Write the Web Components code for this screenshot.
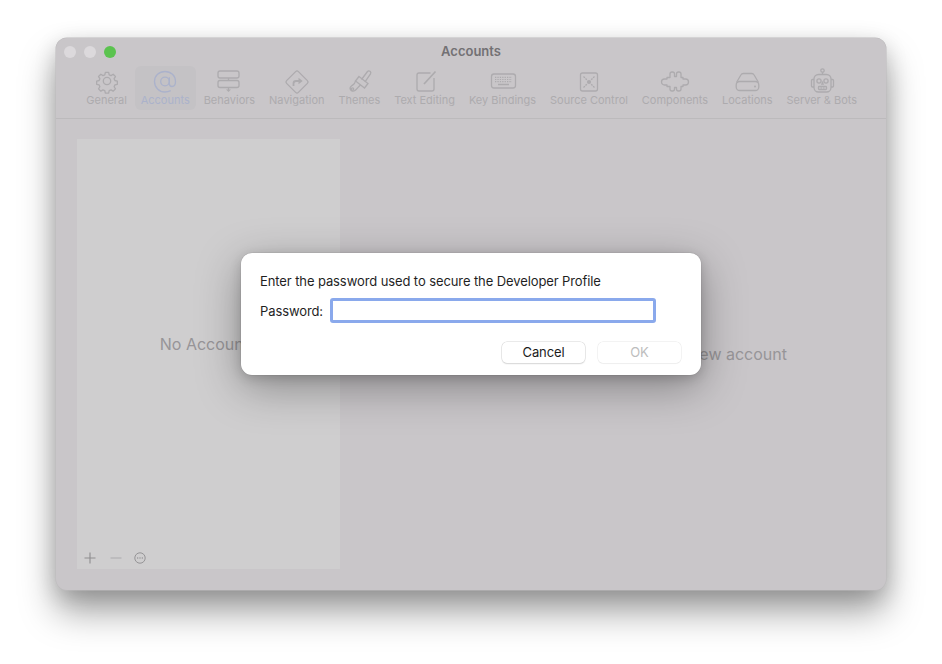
<!DOCTYPE html>
<html>
<head>
<meta charset="utf-8">
<title>Accounts</title>
<style>
html, body { margin: 0; background: #fff; }
body { font-family: Inter, "Liberation Sans", sans-serif; width: 942px; height: 664px; overflow: hidden; }
</style>
</head>
<body>

<prefs-window title="Accounts">
    <prefs-tab label="General" icon="general"></prefs-tab>
    <prefs-tab label="Accounts" icon="accounts" selected></prefs-tab>
    <prefs-tab label="Behaviors" icon="behaviors"></prefs-tab>
    <prefs-tab label="Navigation" icon="navigation"></prefs-tab>
    <prefs-tab label="Themes" icon="themes"></prefs-tab>
    <prefs-tab label="Text Editing" icon="editing"></prefs-tab>
    <prefs-tab label="Key Bindings" icon="keys"></prefs-tab>
    <prefs-tab label="Source Control" icon="source"></prefs-tab>
    <prefs-tab label="Components" icon="components"></prefs-tab>
    <prefs-tab label="Locations" icon="locations"></prefs-tab>
    <prefs-tab label="Server &amp; Bots" icon="bots"></prefs-tab>

    <accounts-list slot="sidebar"></accounts-list>
    <span slot="detail">new account</span>

    <password-dialog slot="dialog"></password-dialog>
</prefs-window>

<script>
// all toolbar icons sit in a 30x30 box
const ICONS = {
    general: `<circle cx="15" cy="14" r="3.700"/><g transform="translate(15 14) scale(.82) translate(-15 -15)" stroke-width="1.600"><path d="M13 4.500h4l.7 3 2.200 .9 2.600-1.600 2.800 2.800-1.600 2.600 .9 2.200 3 .7v4l-3 .7-.9 2.200 1.600 2.600-2.800 2.800-2.600-1.600-2.200 .9-.7 3h-4l-.7-3-2.200-.9-2.600 1.600-2.800-2.800 1.600-2.600-.9-2.200-3-.7v-4l3-.7 .9-2.200-1.600-2.600 2.800-2.800 2.600 1.600 2.200-.9z" stroke-linejoin="round"/></g>`,
    accounts: `<circle cx="15" cy="14.500" r="4.300"/><path d="M19.300 10.200v6.300c0 2 1.200 3 2.700 3 2.300 0 3.500-2.300 3.500-5 0-5.800-4.600-10-10.500-10S4.500 8.700 4.500 14.500 9.100 25 15 25c2.200 0 4-.5 5.700-1.400"/>`,
    behaviors: `<rect x="4" y="4" width="21" height="7" rx="2"/><rect x="4" y="13.500" width="21" height="7" rx="2"/><path d="M14.500 11v2.500M14.500 20.500v2.500"/><path d="M12 22.500h5l-2.500 2.500z" fill="currentColor" stroke="none"/>`,
    navigation: `<path d="M13.600 4.600a2 2 0 0 1 2.800 0l9 9a2 2 0 0 1 0 2.800l-9 9a2 2 0 0 1-2.800 0l-9-9a2 2 0 0 1 0-2.800z"/><path d="M11.500 19v-2.500c0-1.500 1-2.500 2.500-2.500h3.500" stroke-width="1.800"/><path d="M16.500 10.800l4.200 3.200-4.200 3.200z" fill="currentColor" stroke="none"/>`,
    themes: `<path d="M17.500 12.500l6-8a1.900 1.900 0 0 1 3 2.300l-5.500 8"/><path d="M15 9.500l9 7-3.500 4.500-9-7z"/><path d="M11.500 14c-.5 3-2 3.500-3.500 4.500-1.500 1-2.500 2.500-1.500 4.200s3 1.800 4.500 .8c2-1.300 3-3.500 5.500-5.500"/><circle cx="8.500" cy="22" r="1.200"/>`,
    editing: `<path d="M20.500 6H9a2 2 0 0 0-2 2v14a2 2 0 0 0 2 2h13a2 2 0 0 0 2-2V11"/><path d="M14 17L25.500 4.500" stroke-width="1.700"/>`,
    keys: `<rect x="3.500" y="7" width="24" height="14" rx="2.500"/><path d="M7 10.300h17M7 12.500h17M7 14.700h17" stroke-dasharray="1.300 1.100" stroke-width="1.200"/><path d="M10 17.500h11" stroke-width="1.500"/>`,
    source: `<rect x="6.500" y="6" width="17" height="18" rx="2"/><circle cx="15" cy="15" r="2.100" fill="currentColor" stroke="none"/><path d="M9.500 9.500l3.300 3.300M20.500 9.500l-3.300 3.300M9.500 20.500l3.300-3.300M20.500 20.500l-3.300-3.300" stroke-dasharray="2 .8"/>`,
    components: `<path d="M7 10.500H10V7a2 2 0 0 1 2-2h.5a2 2 0 0 1 2 2V9.500h2V7a2 2 0 0 1 2-2h.5a2 2 0 0 1 2 2v3.500H23V12h2.500a3 3 0 0 1 0 6H23v1.500H21V22a2 2 0 0 1-2 2h-.5a2 2 0 0 1-2-2V20.500h-2V22a2 2 0 0 1-2 2H12a2 2 0 0 1-2-2V19.500H7V18H4.500a3 3 0 0 1 0-6H7z" stroke-linejoin="round"/>`,
    locations: `<path d="M4.500 15.500L9 7.800A2.500 2.500 0 0 1 11.200 6.500h8.600A2.500 2.500 0 0 1 22 7.800L26.500 15.500"/><rect x="4.200" y="14.500" width="22.600" height="9" rx="3.500"/><circle cx="23" cy="19.500" r="1" fill="currentColor" stroke="none"/>`,
    bots: `<circle cx="15.500" cy="3.500" r="1.700"/><path d="M15.500 5.200v2.300"/><rect x="7" y="7.500" width="17" height="17.500" rx="4.500"/><path d="M7 12.500H5.500a1 1 0 0 0-1 1v5.500a1 1 0 0 0 1 1H7M24 12.500h1.500a1 1 0 0 1 1 1v5.500a1 1 0 0 1-1 1H24"/><circle cx="12" cy="14" r="2.100"/><circle cx="19" cy="14" r="2.100"/><path d="M15.500 15.500l-.6 1.500h1.200z"/><rect x="11.500" y="19.500" width="8" height="3" rx=".8"/><path d="M14.200 19.500v3M16.800 19.500v3" stroke-width=".8"/>`
}

class PrefsWindow extends HTMLElement {
    constructor() {
        super();
        this.attachShadow({mode: 'open'});
        this.shadowRoot.innerHTML = `
        <style>
        :host { display: flex; flex-direction: column; position: relative; box-sizing: border-box; width: 830px; height: 552px; margin: 38px 0 0 56px;
            background: #c9c6c9; border-radius: 11px; color: #adabae;
            box-shadow: 0 0 0 .5px #bdbbbd, 0 22px 36px rgba(0,0,0,.36), 0 6px 22px rgba(0,0,0,.16); }
        .title { height: 28px; display: flex; align-items: center; justify-content: center; position: relative;
            font-size: 13px; font-weight: 600; color: #737174; padding-bottom: 2px; box-sizing: border-box; }
        .lights { position: absolute; left: 8px; top: 8px; display: flex; gap: 8px; }
        .lights i { width: 12px; height: 12px; border-radius: 50%; background: #dcd9dc; }
        .lights i.on { background: #5bc34f; }
        .tools { display: flex; gap: 1.900px; padding: 0 0 8px 24.300px; border-bottom: 1px solid #bcbabc; }
        .body { flex: 1; display: flex; padding: 20px 21px 21px; }
        .side { width: 263px; flex: none; display: flex; }
        .detail { flex: 1; display: flex; align-items: center; justify-content: flex-end; padding-right: 78px; font-size: 16px; color: #979598; }
        </style>
        <div class="title">
            <div class="lights"><i></i><i></i><i class="on"></i></div>
            <span>${this.getAttribute("title")}</span>
        </div>
        <div class="tools"><slot></slot></div>
        <div class="body">
            <div class="side"><slot name="sidebar"></slot></div>
            <div class="detail"><slot name="detail"></slot></div>
        </div>
        <slot name="dialog"></slot>`;
    }
}
customElements.define('prefs-window', PrefsWindow);

class PrefsTab extends HTMLElement {
    constructor() {
        super();
        this.attachShadow({mode: 'open'});
        this.shadowRoot.innerHTML = `
        <style>
        :host { display: flex; flex-direction: column; align-items: center; height: 44px; padding: 0 6px; border-radius: 6px;
            font-size: 11px; color: #adabae; white-space: nowrap; }
        :host([selected]) { background: #c4c2c5; color: #abb2cb; }
        svg { width: 30px; height: 30px; margin-top: 1px; fill: none; stroke: currentColor; stroke-width: 1.300; flex: none; }
        span { line-height: 12px; margin-top: -3px; }
        </style>
        <svg viewBox="0 0 30 30">${ICONS[this.getAttribute("icon")]}</svg>
        <span>${this.getAttribute("label").replace("&", "&amp;")}</span>`;
    }
}
customElements.define('prefs-tab', PrefsTab);

class AccountsList extends HTMLElement {
    constructor() {
        super();
        this.attachShadow({mode: 'open'});
        this.shadowRoot.innerHTML = `
        <style>
        :host { display: flex; flex-direction: column; flex: 1; background: #cfcecf; }
        .empty { flex: 1; display: flex; align-items: center; justify-content: center; padding-top: 2px; font-size: 16px; color: #979598; }
        .foot { height: 22px; display: flex; align-items: center; gap: 8px; padding-left: 6px; color: #8f8d90; }
        svg { width: 14px; height: 14px; fill: none; stroke: currentColor; stroke-width: 1.100; }
        .off { color: #b0aeb1; margin-left: 4px; margin-right: 2px; }
        </style>
        <div class="empty">No Accounts</div>
        <div class="foot">
            <svg viewBox="0 0 14 14"><path d="M7 1.500v11M1.500 7h11"/></svg>
            <svg class="off" viewBox="0 0 14 14"><path d="M1.500 7h11"/></svg>
            <svg viewBox="0 0 14 14" style="stroke-width:.9"><circle cx="7" cy="7" r="5.200"/><g fill="currentColor" stroke="none"><circle cx="4.700" cy="7" r=".65"/><circle cx="7" cy="7" r=".65"/><circle cx="9.300" cy="7" r=".65"/></g></svg>
        </div>`;
    }
}
customElements.define('accounts-list', AccountsList);

class DialogButton extends HTMLElement {
    constructor() {
        super();
        this.attachShadow({mode: 'open'});
        this.shadowRoot.innerHTML = `
        <style>
        :host { display: flex; align-items: center; justify-content: center; box-sizing: border-box; width: 83px; height: 21px; padding-bottom: 1px;
            background: #fff; border-radius: 5px; font-size: 13px; color: #1c1c1c;
            box-shadow: 0 0 0 .5px #d5d5d5, 0 1px 1.500px rgba(0,0,0,.14); }
        :host([disabled]) { color: #bdbdbd; box-shadow: 0 0 0 .5px #e8e8e8, 0 1px 1px rgba(0,0,0,.04); }
        </style>
        <slot></slot>`;
    }
}
customElements.define('dialog-button', DialogButton);

class PasswordDialog extends HTMLElement {
    constructor() {
        super();
        this.attachShadow({mode: 'open'});
        this.shadowRoot.innerHTML = `
        <style>
        :host { display: block; position: absolute; left: 185px; top: 215px; box-sizing: border-box; width: 460px; height: 122px;
            padding: 19px 20px 0 19px; background: #fff; border-radius: 11px; color: #1f1f1f; font-size: 13px; letter-spacing: -.1px;
            box-shadow: 0 0 0 .5px rgba(0,0,0,.08), 0 12px 44px rgba(0,0,0,.34), 0 3px 12px rgba(0,0,0,.16); }
        .msg { line-height: 18px; }
        .row { display: flex; align-items: center; gap: 7px; margin-top: 8px; }
        .field { box-sizing: border-box; width: 326px; height: 25px; background: #fff; border: 3px solid #8aa9ec; border-radius: 3px; }
        .btns { display: flex; justify-content: flex-end; gap: 13px; margin-top: 19px; }
        </style>
        <div class="msg">Enter the password used to secure the Developer Profile</div>
        <div class="row"><span>Password:</span><div class="field"></div></div>
        <div class="btns">
            <dialog-button>Cancel</dialog-button>
            <dialog-button disabled>OK</dialog-button>
        </div>`;
    }
}
customElements.define('password-dialog', PasswordDialog);
</script>
</body>
</html>
